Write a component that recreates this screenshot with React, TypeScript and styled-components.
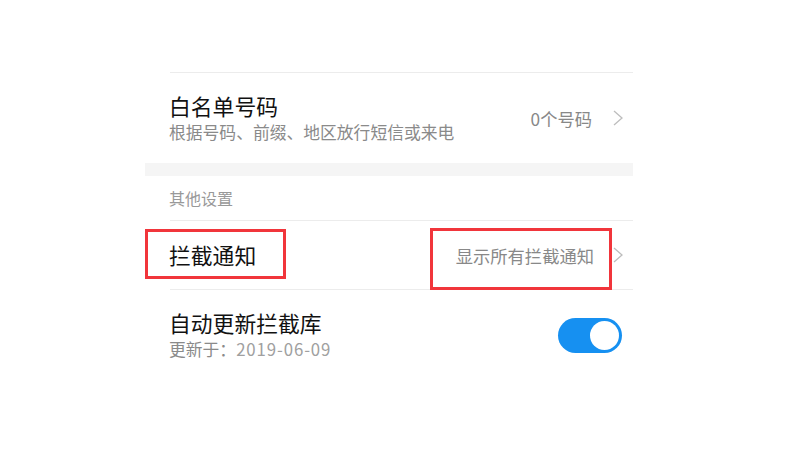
import styled, { createGlobalStyle } from "styled-components";

const GlobalStyle = createGlobalStyle`
html, body {
  margin: 0;
  padding: 0;
  background: #ffffff;
}
* {
  box-sizing: border-box;
}
body {
  font-family: "Noto Sans CJK SC", "Noto Sans", sans-serif;
}
`;

const Page = styled.div`
  width: 799px;
  height: 449px;
  overflow: hidden;
  background: #ffffff;
  padding-left: 145px;
  padding-top: 72px;
`;

const Column = styled.div`
  width: 488px;
  display: flex;
  flex-direction: column;
`;

const Divider = styled.div`
  height: 1px;
  margin-left: 25px;
  background: #ececec;
`;

const Band = styled.div`
  height: 13px;
  background: #f5f5f5;
`;

const SectionHeader = styled.div`
  height: 44px;
  display: flex;
  align-items: center;
  padding-left: 24px;
  font-size: 16px;
  color: #999999;
`;

const Row = styled.div<{ $height: number }>`
  position: relative;
  height: ${(p) => p.$height}px;
  display: flex;
  align-items: center;
  justify-content: space-between;
  padding-left: 24px;
  padding-right: 10px;
`;

const TextBlock = styled.div`
  display: flex;
  flex-direction: column;
`;

const Title = styled.div`
  font-size: 21.8px;
  line-height: 26px;
  color: #111111;
`;

const Subtitle = styled.div`
  margin-top: 1px;
  font-size: 16.8px;
  line-height: 24px;
  color: #8a8a8a;
`;

const DateText = styled.span`
  letter-spacing: 0.9px;
  color: #a0a0a0;
`;

const Trailing = styled.div`
  display: flex;
  align-items: center;
`;

const Value = styled.span<{ $gap: number }>`
  font-size: 17.3px;
  color: #888888;
  margin-right: ${(p) => p.$gap}px;
`;

const Switch = styled.div`
  position: relative;
  width: 64px;
  height: 35px;
  border-radius: 18px;
  background: #1690f1;
  margin-right: 1px;
`;

const Knob = styled.div`
  position: absolute;
  top: 3px;
  right: 3px;
  width: 29px;
  height: 29px;
  border-radius: 50%;
  background: #ffffff;
`;

const Highlight = styled.div<{ $left: number; $top: number; $w: number; $h: number }>`
  position: absolute;
  left: ${(p) => p.$left}px;
  top: ${(p) => p.$top}px;
  width: ${(p) => p.$w}px;
  height: ${(p) => p.$h}px;
  border: 3px solid #f1353b;
  pointer-events: none;
`;

const Chevron = () => (
  <svg width="10" height="16" viewBox="0 0 10 16" fill="none">
    <polyline points="1,1 9,8 1,15" stroke="#bdbdbd" strokeWidth="1.3" />
  </svg>
);

const App: React.FC = () => {
  return (
    <>
      <GlobalStyle />
      <Page>
        <Column>
          <Divider />
          <Row $height={90}>
            <TextBlock>
              <Title>白名单号码</Title>
              <Subtitle>根据号码、前缀、地区放行短信或来电</Subtitle>
            </TextBlock>
            <Trailing>
              <Value $gap={21}>0个号码</Value>
              <Chevron />
            </Trailing>
          </Row>
          <Band />
          <SectionHeader>其他设置</SectionHeader>
          <Divider />
          <Row $height={68}>
            <Title>拦截通知</Title>
            <Trailing>
              <Value $gap={19}>显示所有拦截通知</Value>
              <Chevron />
            </Trailing>
            <Highlight $left={0} $top={8} $w={141} $h={50} />
            <Highlight $left={285} $top={7} $w={182} $h={62} />
          </Row>
          <Divider />
          <Row $height={90}>
            <TextBlock>
              <Title>自动更新拦截库</Title>
              <Subtitle>
                更新于：<DateText>2019-06-09</DateText>
              </Subtitle>
            </TextBlock>
            <Switch>
              <Knob />
            </Switch>
          </Row>
        </Column>
      </Page>
    </>
  );
};

export default App;
